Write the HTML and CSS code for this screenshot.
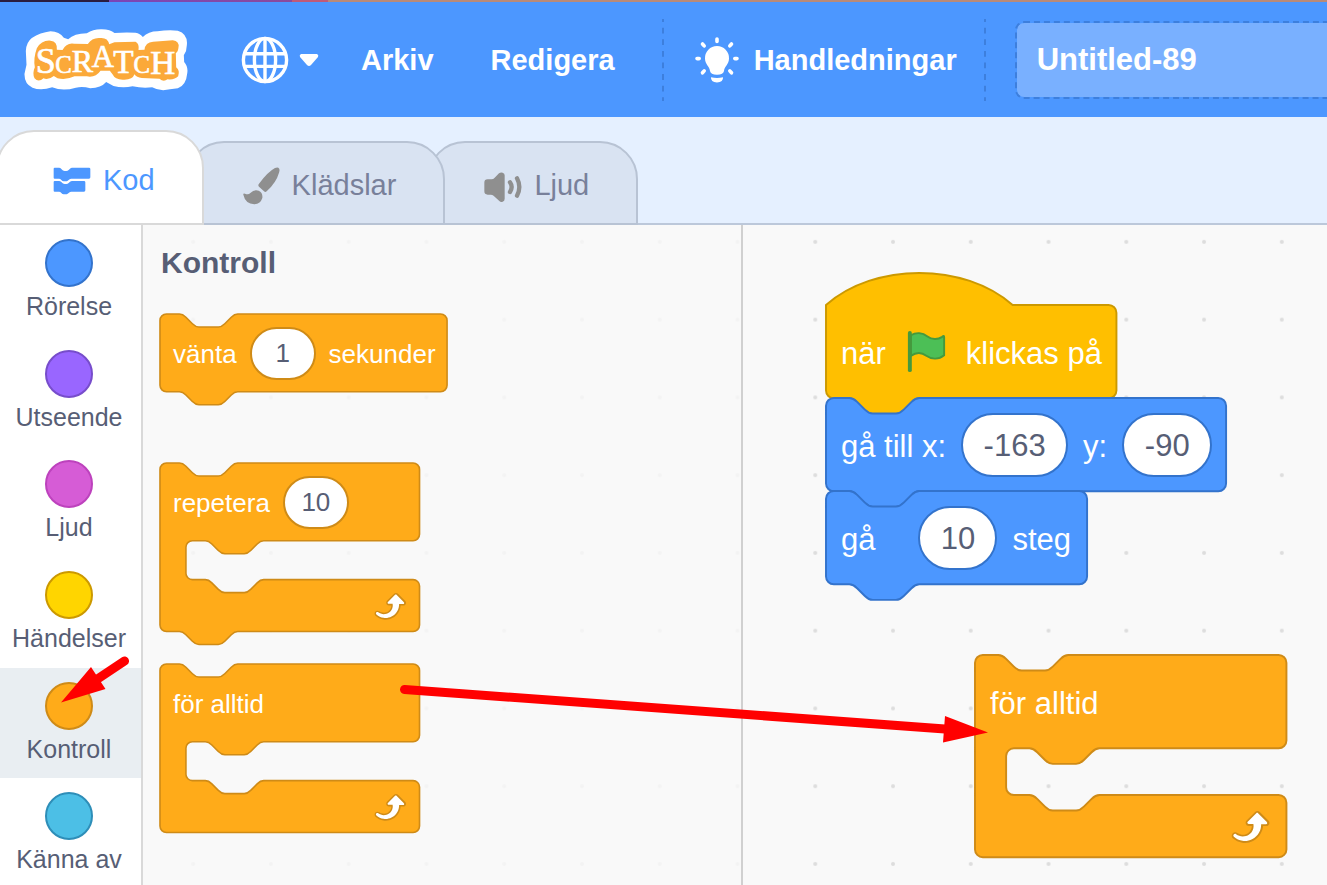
FILE: index.html
```html
<!DOCTYPE html>
<html lang="sv">
<head>
<meta charset="utf-8">
<title>Scratch - Untitled-89</title>
<link rel="stylesheet" href="styles.css">
</head>
<body>
<div class="app">
  <div class="browser-strip"></div>
  <header class="menu-bar">
    <a class="logo" href="#" aria-label="Scratch">
      <svg viewBox="74 86 491 186" width="164" height="62">
        <path fill="#fff" d="M97 113Q122 97 153 93Q180 94 193 112L206 117Q224 99 262 99Q282 86 307 87Q333 88 345 98Q375 95 408 97Q422 99 430 110Q447 93 474 93Q505 88 535 91Q566 101 562 135Q562 152 553 165L554 185Q567 200 563 220Q560 254 535 264Q510 267 491 270Q472 269 458 261Q430 265 399 258Q370 264 342 257L320 245Q305 263 272 264Q250 257 229 262Q190 274 158 261Q124 272 99 262Q74 250 75 220L81 193L79 152Q80 126 97 113Z"/>
        <path fill="#fba939" d="M112 144Q126 119 153 121Q174 122 172 148L189 149Q201 126 224 130L265 131Q277 112 300 113Q325 110 329 132L345 126L408 124Q420 130 417 149L435 148Q437 126 461 124L520 120Q540 123 537 141Q536 155 529 158L530 201Q542 210 536 228Q526 239 504 237Q492 246 480 235L427 233Q411 232 405 222Q399 239 372 238Q347 239 339 222L331 211L303 211Q288 233 262 228L225 228Q200 240 174 234L163 227Q145 241 132 234Q117 247 105 234Q98 219 106 201Q101 175 112 144Z"/>
        <text class="logo-letters"><tspan x="109" y="219" font-size="108">S</tspan><tspan x="167" y="219" font-size="74">C</tspan><tspan x="217" y="215" font-size="96">R</tspan><tspan x="277" y="199" font-size="92">A</tspan><tspan x="341" y="218" font-size="100">T</tspan><tspan x="402" y="218" font-size="74">C</tspan><tspan x="452" y="221" font-size="104">H</tspan></text>
      </svg>
    </a>
    <button class="language" aria-label="Språk">
      <svg width="48" height="48" viewBox="0 0 48 48" fill="none" stroke="#fff" stroke-width="3.4">
        <circle cx="24" cy="24" r="21.6"/><ellipse cx="24" cy="24" rx="10.6" ry="21.6"/><path d="M24 2v44M4 17.8h40M4 30.4h40"/>
      </svg>
      <svg width="20" height="14" viewBox="0 0 20 14"><path fill="#fff" d="M2 1h16q2 1 1 3l-7 8q-2 2-4 0L1 4Q0 2 2 1Z"/></svg>
    </button>
    <nav class="menus">
      <button class="menu">Arkiv</button>
      <button class="menu">Redigera</button>
    </nav>
    <svg class="divider" width="2" height="82"><path d="M1 0v82" stroke="#3d7fdd" stroke-width="2" stroke-dasharray="5.8 5.8" stroke-dashoffset="2.9"/></svg>
    <button class="tutorials">
      <svg width="44" height="48" viewBox="0 0 44 48">
        <path fill="#fff" d="M22 10a12 12 0 0 1 12 12.500c0 6-4.500 7.500-5 12.500q-.5 3.700-7 3.700t-7-3.700C14.500 30 10 28.500 10 22.500A12 12 0 0 1 22 10ZM16 41.300q6 1.500 12 0 .5 5-6 5.200-6.500-.2-6-5.200Z"/>
        <path stroke="#fff" stroke-width="3.600" stroke-linecap="round" d="M22 3v2.500M2 22.600h2.200M39.800 22.600H42M7.500 8l1.700 1.900M36.500 8l-1.700 1.900M7.500 36.800l1.700-1.900M36.500 36.800l-1.700-1.900"/>
      </svg>
      <span class="menu">Handledningar</span>
    </button>
    <svg class="divider" width="2" height="82"><path d="M1 0v82" stroke="#3d7fdd" stroke-width="2" stroke-dasharray="5.8 5.8" stroke-dashoffset="2.9"/></svg>
    <input class="project-title" type="text" value="Untitled-89" aria-label="Projekttitel">
  </header>

  <div class="tabs" role="tablist">
    <button class="tab tab-active" role="tab" aria-selected="true">
      <svg width="38" height="30" viewBox="158 140 114 90"><path fill="#4c97ff" d="M163 148h13q4 0 7 4l4 4q3 2 6 2h5q4 0 7-3l4-4q3-3 6-3h51q4 0 4 4v25q0 4-4 4h-53q-4 0-7 3l-5 4q-2 1-5 1h-6q-4 0-7-4-3-4-7-4h-13q-3 0-3-3v-27q0-3 3-3ZM163 188h13q4 0 7 3l4 4q3 2 6 2h5q4 0 7-3l4-4q3-2 6-2h36q4 0 4 4v24q0 4-4 4h-38q-4 0-7 3l-4 3q-3 2-6 2h-6q-4 0-7-4-3-4-7-4h-13q-3 0-3-3v-26q0-3 3-3Z"/></svg>
      Kod
    </button>
    <button class="tab tab-costumes" role="tab" aria-selected="false">
      <svg width="37" height="38" viewBox="728 140 111 114"><path fill="#8f8f8f" d="M834 142q6 4 2 15-8 29-37 56-4 4-8 0l-15-14q-4-4 0-9 27-36 48-47 6-3 10-1ZM729 223q-1-5 5-3 10 4 16-2 12-12 25-7 13 6 11 22-5 17-24 19-27-2-33-29Z"/></svg>
      Klädslar
    </button>
    <button class="tab tab-sounds" role="tab" aria-selected="false">
      <svg width="38" height="34" viewBox="433 150 114 102"><path fill="#8f8f8f" d="M444 181h11q6 0 10-5l13-13q5-4 11-2 6 2 6 8v70q0 7-6 9-6 2-10-2l-14-13q-5-6-11-6h-10q-10 0-10-10v-26q0-10 10-10Z"/><path fill="none" stroke="#8f8f8f" stroke-width="13" stroke-linecap="round" d="M511 190q10 14 0 29M532 178q14 26 0 52"/></svg>
      Ljud
    </button>
  </div>

  <main class="editor">
    <div class="categories">
      <button class="category"><span class="bubble motion"></span>Rörelse</button>
      <button class="category"><span class="bubble looks"></span>Utseende</button>
      <button class="category"><span class="bubble sound"></span>Ljud</button>
      <button class="category"><span class="bubble events"></span>Händelser</button>
      <button class="category category-selected"><span class="bubble control"></span>Kontroll</button>
      <button class="category"><span class="bubble sensing"></span>Känna av</button>
    </div>
    <div class="canvas">
      <svg class="dots" aria-hidden="true">
        <defs><pattern id="dot" width="40" height="40" patternUnits="userSpaceOnUse" patternTransform="translate(11.3 -22) scale(1.944)"><circle cx="20" cy="20" r="1.050" fill="#ddd"/></pattern></defs>
        <rect width="100%" height="100%" fill="url(#dot)"/>
      </svg>
      <section class="palette">
        <h2 class="palette-title">Kontroll</h2>
        <div class="block block-wait">
          <svg class="shape" fill="#ffab19" stroke="#cf8b17"><path transform="scale(1.62)" d="M0 4A4 4 0 0 1 4 0H12c2 0 3 1 4 2l4 4c1 1 2 2 4 2h12c2 0 3-1 4-2l4-4c1-1 2-2 4-2H173.200a4 4 0 0 1 4 4v40a4 4 0 0 1-4 4H48c-2 0-3 1-4 2l-4 4c-1 1-2 2-4 2H24c-2 0-3-1-4-2l-4-4c-1-1-2-2-4-2H4a4 4 0 0 1-4-4Z"/></svg>
          <label for="wait">vänta</label><input class="value control-value" id="wait" type="text" value="1"><span>sekunder</span>
        </div>
        <div class="block block-repeat">
          <svg class="shape" fill="#ffab19" stroke="#cf8b17"><g transform="scale(1.62)"><path d="M0 4A4 4 0 0 1 4 0H12c2 0 3 1 4 2l4 4c1 1 2 2 4 2h12c2 0 3-1 4-2l4-4c1-1 2-2 4-2H156.200a4 4 0 0 1 4 4v40a4 4 0 0 1-4 4H64c-2 0-3 1-4 2l-4 4c-1 1-2 2-4 2H40c-2 0-3-1-4-2l-4-4c-1-1-2-2-4-2h-8a4 4 0 0 0-4 4v16a4 4 0 0 0 4 4h8c2 0 3 1 4 2l4 4c1 1 2 2 4 2h12c2 0 3-1 4-2l4-4c1-1 2-2 4-2H156.200a4 4 0 0 1 4 4v24a4 4 0 0 1-4 4H48c-2 0-3 1-4 2l-4 4c-1 1-2 2-4 2H24c-2 0-3-1-4-2l-4-4c-1-1-2-2-4-2H4a4 4 0 0 1-4-4Z"/><use href="#loop" x="128.400" y="76"/></g></svg>
          <label for="repeat">repetera</label><input class="value control-value" id="repeat" type="text" value="10">
        </div>
        <div class="block">
          <svg class="shape" fill="#ffab19" stroke="#cf8b17">
            <defs><g id="loop" stroke="none"><path fill="#cf8b17" d="M23.300 11c-.3.6-.9 1-1.500 1h-1.600c-.1 1.300-.5 2.500-1.100 3.600-.9 1.700-2.300 3.200-4.100 4.100-1.700.9-3.600 1.200-5.500.9-1.800-.3-3.500-1.100-4.900-2.300-.7-.7-.7-1.900 0-2.600.6-.6 1.600-.7 2.300-.2H7c.9.6 1.900.9 2.900.9s1.900-.3 2.700-.9c1.100-.8 1.800-2.100 1.800-3.500h-1.500c-.9 0-1.700-.7-1.700-1.700 0-.4.2-.9.5-1.200l4.400-4.400c.7-.6 1.700-.6 2.400 0L23 9.200c.5.5.6 1.200.3 1.800Z"/><path fill="#fff" d="M21.800 11h-2.600c0 1.500-.3 2.900-1 4.200-.8 1.600-2.100 2.800-3.700 3.600-1.500.8-3.300 1.100-4.900.8-1.600-.2-3.200-1-4.400-2.100-.4-.3-.4-.9-.1-1.200.3-.4.9-.4 1.200-.1 1 .7 2.200 1.100 3.400 1.100s2.300-.3 3.300-1c.9-.6 1.600-1.500 2-2.600.3-.9.4-1.800.2-2.800h-2.400c-.4 0-.7-.3-.7-.7 0-.2.1-.3.2-.4l4.400-4.400c.3-.3.7-.3.9 0L22 9.800c.3.3.4.6.3.9s-.3.3-.5.3Z"/></g></defs>
            <g transform="scale(1.62)"><path d="M0 4A4 4 0 0 1 4 0H12c2 0 3 1 4 2l4 4c1 1 2 2 4 2h12c2 0 3-1 4-2l4-4c1-1 2-2 4-2H156.200a4 4 0 0 1 4 4v40a4 4 0 0 1-4 4H64c-2 0-3 1-4 2l-4 4c-1 1-2 2-4 2H40c-2 0-3-1-4-2l-4-4c-1-1-2-2-4-2h-8a4 4 0 0 0-4 4v16a4 4 0 0 0 4 4h8c2 0 3 1 4 2l4 4c1 1 2 2 4 2h12c2 0 3-1 4-2l4-4c1-1 2-2 4-2H156.200a4 4 0 0 1 4 4v24a4 4 0 0 1-4 4H4a4 4 0 0 1-4-4Z"/><use href="#loop" x="128.400" y="76"/></g></svg>
          <span>för alltid</span>
        </div>
      </section>
      <section class="workspace">
        <div class="stack main-stack">
          <div class="block large">
            <svg class="shape" fill="#ffbf00" stroke="#cc9900"><path transform="scale(1.944)" d="M0 0C25-22 71-22 96 0H145.400a4 4 0 0 1 4 4v40a4 4 0 0 1-4 4H48c-2 0-3 1-4 2l-4 4c-1 1-2 2-4 2H24c-2 0-3-1-4-2l-4-4c-1-1-2-2-4-2H4a4 4 0 0 1-4-4Z"/></svg>
            <span>när</span>
            <svg class="flag" width="47" height="47" viewBox="0 0 24 24"><path fill="#4cbf56" stroke="#45993d" stroke-linejoin="round" d="M4 3.200c2.700-1.600 6-1.400 8.500.6 2.200 1.700 5.300 1.700 7.500.2q1-.8 1 .1V13.400c-2.700 2.300-6.500 2.200-9.100.3C9.400 11.800 6.600 12 4 13.700Z"/><path stroke="#45993d" stroke-width="2" stroke-linecap="round" d="M3.500 2v19"/></svg>
            <span>klickas på</span>
          </div>
          <div class="block large">
            <svg class="shape" fill="#4c97ff" stroke="#3373cc"><path transform="scale(1.944)" d="M0 4A4 4 0 0 1 4 0H12c2 0 3 1 4 2l4 4c1 1 2 2 4 2h12c2 0 3-1 4-2l4-4c1-1 2-2 4-2H201.800a4 4 0 0 1 4 4v40a4 4 0 0 1-4 4H48c-2 0-3 1-4 2l-4 4c-1 1-2 2-4 2H24c-2 0-3-1-4-2l-4-4c-1-1-2-2-4-2H4a4 4 0 0 1-4-4Z"/></svg>
            <label for="goto-x">gå till x:</label><input class="value motion-value wide" id="goto-x" type="text" value="-163">
            <label for="goto-y">y:</label><input class="value motion-value medium" id="goto-y" type="text" value="-90">
          </div>
          <div class="block large">
            <svg class="shape" fill="#4c97ff" stroke="#3373cc"><path transform="scale(1.944)" d="M0 4A4 4 0 0 1 4 0H12c2 0 3 1 4 2l4 4c1 1 2 2 4 2h12c2 0 3-1 4-2l4-4c1-1 2-2 4-2H130.300a4 4 0 0 1 4 4v40a4 4 0 0 1-4 4H48c-2 0-3 1-4 2l-4 4c-1 1-2 2-4 2H24c-2 0-3-1-4-2l-4-4c-1-1-2-2-4-2H4a4 4 0 0 1-4-4Z"/></svg>
            <label class="move-label" for="steps">gå</label><input class="value motion-value" id="steps" type="text" value="10"><span>steg</span>
          </div>
        </div>
        <div class="stack loop-stack">
          <div class="block large">
            <svg class="shape" fill="#ffab19" stroke="#cf8b17"><g transform="scale(1.944)"><path d="M0 4A4 4 0 0 1 4 0H12c2 0 3 1 4 2l4 4c1 1 2 2 4 2h12c2 0 3-1 4-2l4-4c1-1 2-2 4-2H156.200a4 4 0 0 1 4 4v40a4 4 0 0 1-4 4H64c-2 0-3 1-4 2l-4 4c-1 1-2 2-4 2H40c-2 0-3-1-4-2l-4-4c-1-1-2-2-4-2h-8a4 4 0 0 0-4 4v16a4 4 0 0 0 4 4h8c2 0 3 1 4 2l4 4c1 1 2 2 4 2h12c2 0 3-1 4-2l4-4c1-1 2-2 4-2H156.200a4 4 0 0 1 4 4v24a4 4 0 0 1-4 4H4a4 4 0 0 1-4-4Z"/><use href="#loop" x="128" y="76"/></g></svg>
            <span>för alltid</span>
          </div>
        </div>
      </section>
    </div>
    <svg class="arrows" aria-hidden="true" fill="#f00" stroke="#f00">
      <g stroke-width="9" stroke-linecap="round"><path d="M124.500 436L96 455M404.500 464.500L945 504"/></g>
      <path stroke="none" d="M61 477.500L91 442L105.500 464ZM988 507.500L945 491L943 517.500Z"/>
    </svg>
  </main>
</div>
</body>
</html>
```
FILE: styles.css
```css
* { box-sizing: border-box; }
body {
  margin: 0;
  font-family: "Liberation Sans", Arial, sans-serif;
  color: #575e75;
  background: #f9f9f9;
}
button { border: 0; padding: 0; background: none; font: inherit; color: inherit; cursor: pointer; }
svg { flex: none; }
.app { display: flex; flex-direction: column; height: 100vh; overflow: hidden; }

.browser-strip {
  flex: none;
  height: 2px;
  background: linear-gradient(to right, #2a1d40 0 109px, #7a45b8 109px, #8b4a9c 292px, #c05a78 292px 328px, #b98a78 328px);
}
.menu-bar {
  flex: none;
  display: flex;
  align-items: center;
  height: 115px;
  padding-left: 24px;
  background: #4c97ff;
  color: #fff;
  font-size: 29px;
  font-weight: bold;
  white-space: nowrap;
}
.logo { display: flex; }
.logo-letters { font-family: "Liberation Serif", serif; font-weight: normal; fill: #fff; stroke: #fff; stroke-width: 2px; }
.language { display: flex; align-items: center; gap: 10px; margin-left: 53px; }
.menus { display: flex; gap: 57px; margin: 0 47px 0 42px; }
.menu { padding-top: 2px; }
.tutorials { display: flex; align-items: center; gap: 15px; margin: 0 27px 0 31px; }
.project-title {
  flex: 1;
  min-width: 200px;
  height: 78px;
  margin: 0 -20px 0 29px;
  padding: 0 20px;
  border: 2px dashed #3d7fdd;
  border-radius: 9px;
  background: #79b0ff;
  background-clip: padding-box;
  color: #fff;
  font: bold 31px "Liberation Sans", Arial, sans-serif;
}

.tabs {
  flex: none;
  display: flex;
  align-items: flex-end;
  height: 108px;
  background: #e5f0ff;
  border-bottom: 2px solid #bcc8da;
}
.tab {
  position: relative;
  display: flex;
  align-items: center;
  gap: 12px;
  height: 84px;
  margin-bottom: -2px;
  padding: 5px 47px 0 55px;
  border: 2px solid #b8c3d4;
  border-radius: 38px 38px 0 0;
  background: #d9e3f2;
  color: #78809a;
  font-size: 29px;
}
.tab-active {
  z-index: 3;
  height: 95px;
  margin-left: -4px;
  padding: 5px 47px 0 55px;
  border-color: #d9d9d9;
  background: #fff;
  color: #4c97ff;
}
.tab-costumes { z-index: 2; margin-left: -18px; }
.tab-sounds { z-index: 1; margin-left: -18px; }

.editor { position: relative; flex: 1; display: flex; min-height: 0; }
.categories {
  flex: none;
  display: grid;
  grid-template-rows: repeat(6, 1fr);
  width: 143px;
  height: 664px;
  border-right: 2px solid #d9d9d9;
  background: #fff;
}
.category {
  display: flex;
  flex-direction: column;
  align-items: center;
  gap: 4px;
  padding: 14px 3px 0 0;
  font-size: 25px;
  line-height: 30px;
}
.category-selected { background: #e9eef2; }
.bubble { width: 48px; height: 48px; border: 2px solid; border-radius: 50%; }
.motion { background: #4c97ff; border-color: #3373cc; }
.looks { background: #9966ff; border-color: #774dcb; }
.sound { background: #d65cd6; border-color: #bd42bd; }
.events { background: #ffd500; border-color: #cc9900; }
.control { background: #ffab19; border-color: #cf8b17; }
.sensing { background: #4cbfe6; border-color: #2e8eb8; }

.canvas { position: relative; flex: 1; display: flex; min-width: 0; overflow: hidden; }
.dots { position: absolute; inset: 0; width: 100%; height: 100%; }
.palette {
  position: relative;
  flex: none;
  width: 600px;
  padding: 20px 17px;
  border-right: 2px solid #d0d0d0;
  background: rgba(249, 249, 249, 0.8);
}
.palette-title { margin: 0 0 34px; padding-left: 1px; font-size: 30px; line-height: 35px; }
.workspace { position: relative; flex: 1; }

.block {
  position: relative;
  display: flex;
  align-items: center;
  gap: 13px;
  height: 78px;
  padding: 0 0 0 13px;
  color: #fff;
  font-size: 26px;
  line-height: 30px;
  white-space: nowrap;
}
.block > * { position: relative; }
.block > label, .block > span { padding-top: 2px; }
.block > .shape { position: absolute; top: 0; left: 0; width: 100%; height: 100%; overflow: visible; }
.block-wait { margin-bottom: 71px; }
.block-repeat { margin-bottom: 123px; }
.value {
  width: 66px;
  height: 53px;
  padding: 0;
  border: 2px solid;
  border-radius: 27px;
  background: #fff;
  color: #575e75;
  font: inherit;
  text-align: center;
}
.control-value { border-color: #cf8b17; }
.motion-value { border-color: #3373cc; }
.large { gap: 15px; height: 93px; padding: 1px 0 0 15px; font-size: 31px; line-height: 36px; }
.block.large > label, .block.large > span { padding-top: 4px; }
.large .value { width: 79px; height: 64px; padding-top: 2px; border-radius: 32px; }
.large .wide { width: 107px; }
.large .medium { width: 90px; }
.flag { margin: 0 1px 0 2px; }
.move-label { margin-right: 28px; }
.stack { position: absolute; }
.main-stack { top: 80px; left: 83px; }
.loop-stack { top: 430px; left: 232px; }
.arrows { position: absolute; inset: 0; width: 100%; height: 100%; pointer-events: none; }
```
